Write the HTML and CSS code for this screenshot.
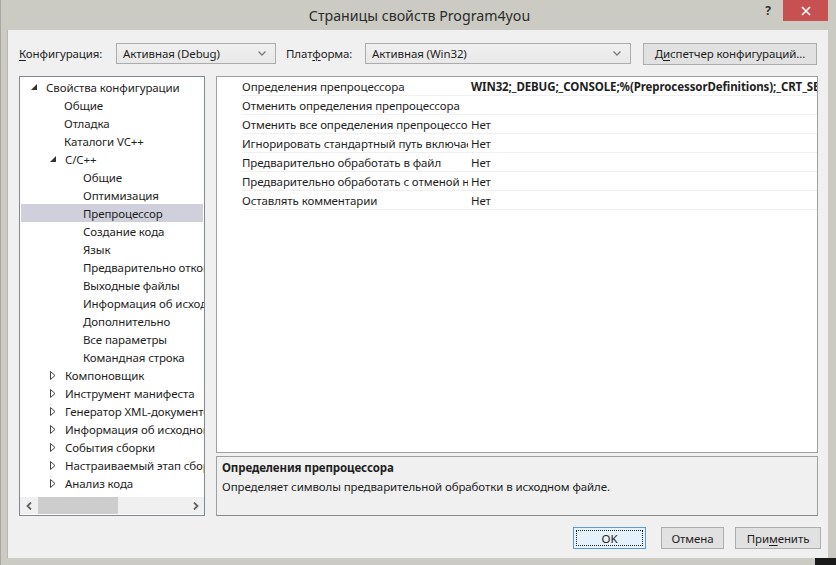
FILE: index.html
```html
<!DOCTYPE html>
<html lang="ru">
<head>
<meta charset="utf-8">
<title>Страницы свойств Program4you</title>
<link rel="stylesheet" href="styles.css">
</head>
<body>
<div class="window">
  <div class="titlebar">
    <div class="title">Страницы свойств Program4you</div>
    <div class="caption-btns">
      <span class="help">?</span>
      <span class="close"><svg width="10" height="10" viewBox="0 0 10 10"><path d="M1 1L9 9M9 1L1 9" stroke="#fff" stroke-width="1.6"/></svg></span>
    </div>
  </div>
  <div class="client">
    <div class="toolbar">
      <label class="lbl lbl-conf"><span class="ak">К</span>онфигурация:</label>
      <div class="combo combo-conf"><span>Активная (Debug)</span><svg class="chev" width="8" height="5" viewBox="0 0 8 5"><path d="M0.5 0.5L4 4L7.5 0.5" fill="none" stroke="#7a7a7a" stroke-width="1.3"/></svg></div>
      <label class="lbl lbl-plat">Плат<span class="ak">ф</span>орма:</label>
      <div class="combo combo-plat"><span>Активная (Win32)</span><svg class="chev" width="8" height="5" viewBox="0 0 8 5"><path d="M0.5 0.5L4 4L7.5 0.5" fill="none" stroke="#7a7a7a" stroke-width="1.3"/></svg></div>
      <button class="btn btn-mgr">Д<span class="ak">и</span>спетчер конфигураций...</button>
    </div>
    <div class="main">
      <div class="tree">
        <ul class="tree-list">
          <li class="row l0"><span class="tw"><svg width="6" height="6" viewBox="0 0 6 6"><path d="M6 0V6H0Z" fill="#333"/></svg></span>Свойства конфигурации</li>
          <li class="row l1n">Общие</li>
          <li class="row l1n">Отладка</li>
          <li class="row l1n">Каталоги VC++</li>
          <li class="row l1"><span class="tw"><svg width="6" height="6" viewBox="0 0 6 6"><path d="M6 0V6H0Z" fill="#333"/></svg></span>C/C++</li>
          <li class="row l2">Общие</li>
          <li class="row l2">Оптимизация</li>
          <li class="row l2 sel">Препроцессор</li>
          <li class="row l2">Создание кода</li>
          <li class="row l2">Язык</li>
          <li class="row l2">Предварительно откомпилированные заголовки</li>
          <li class="row l2">Выходные файлы</li>
          <li class="row l2">Информация об исходных файлах</li>
          <li class="row l2">Дополнительно</li>
          <li class="row l2">Все параметры</li>
          <li class="row l2">Командная строка</li>
          <li class="row l1c"><span class="tw"><svg width="6" height="9" viewBox="0 0 6 9"><path d="M0.5 0.5L5 4.5L0.5 8.5Z" fill="none" stroke="#444" stroke-width="1"/></svg></span>Компоновщик</li>
          <li class="row l1c"><span class="tw"><svg width="6" height="9" viewBox="0 0 6 9"><path d="M0.5 0.5L5 4.5L0.5 8.5Z" fill="none" stroke="#444" stroke-width="1"/></svg></span>Инструмент манифеста</li>
          <li class="row l1c"><span class="tw"><svg width="6" height="9" viewBox="0 0 6 9"><path d="M0.5 0.5L5 4.5L0.5 8.5Z" fill="none" stroke="#444" stroke-width="1"/></svg></span>Генератор XML-документов</li>
          <li class="row l1c"><span class="tw"><svg width="6" height="9" viewBox="0 0 6 9"><path d="M0.5 0.5L5 4.5L0.5 8.5Z" fill="none" stroke="#444" stroke-width="1"/></svg></span>Информация об исходном коде</li>
          <li class="row l1c"><span class="tw"><svg width="6" height="9" viewBox="0 0 6 9"><path d="M0.5 0.5L5 4.5L0.5 8.5Z" fill="none" stroke="#444" stroke-width="1"/></svg></span>События сборки</li>
          <li class="row l1c"><span class="tw"><svg width="6" height="9" viewBox="0 0 6 9"><path d="M0.5 0.5L5 4.5L0.5 8.5Z" fill="none" stroke="#444" stroke-width="1"/></svg></span>Настраиваемый этап сборки</li>
          <li class="row l1c"><span class="tw"><svg width="6" height="9" viewBox="0 0 6 9"><path d="M0.5 0.5L5 4.5L0.5 8.5Z" fill="none" stroke="#444" stroke-width="1"/></svg></span>Анализ кода</li>
        </ul>
        <div class="hscroll">
          <span class="sarrow"><svg width="6" height="8" viewBox="0 0 6 8"><path d="M5 0.5L1.5 4L5 7.5" fill="none" stroke="#606060" stroke-width="1.8"/></svg></span>
          <div class="track"><div class="thumb"></div></div>
          <span class="sarrow"><svg width="6" height="8" viewBox="0 0 6 8"><path d="M1 0.5L4.5 4L1 7.5" fill="none" stroke="#606060" stroke-width="1.8"/></svg></span>
        </div>
      </div>
      <div class="right">
        <div class="grid">
          <div class="prow"><div class="pname">Определения препроцессора</div><div class="pval bold">WIN32;_DEBUG;_CONSOLE;%(PreprocessorDefinitions);_CRT_SECURE_NO_WARNINGS</div></div>
          <div class="prow"><div class="pname">Отменить определения препроцессора</div><div class="pval"></div></div>
          <div class="prow"><div class="pname">Отменить все определения препроцессора</div><div class="pval">Нет</div></div>
          <div class="prow"><div class="pname">Игнорировать стандартный путь включаемых файлов</div><div class="pval">Нет</div></div>
          <div class="prow"><div class="pname">Предварительно обработать в файл</div><div class="pval">Нет</div></div>
          <div class="prow"><div class="pname">Предварительно обработать с отменой номеров строк</div><div class="pval">Нет</div></div>
          <div class="prow"><div class="pname">Оставлять комментарии</div><div class="pval">Нет</div></div>
        </div>
        <div class="desc">
          <div class="desc-title">Определения препроцессора</div>
          <div class="desc-text">Определяет символы предварительной обработки в исходном файле.</div>
        </div>
      </div>
    </div>
    <div class="footer">
      <button class="btn btn-ok"><span class="focus">OK</span></button>
      <button class="btn btn-cancel">Отмена</button>
      <button class="btn btn-apply">При<span class="ak">м</span>енить</button>
    </div>
  </div>
  <div class="corner"></div>
</div>
</body>
</html>
```

FILE: styles.css
```css
* { box-sizing: border-box; }
html, body { margin: 0; padding: 0; }
body {
  width: 836px;
  height: 565px;
  overflow: hidden;
  font-family: "Noto Sans", "Segoe UI", sans-serif;
  font-size: 11.5px;
  letter-spacing: -0.1px;
  color: #1e1e1e;
  background: #cbcbc4;
}
.window {
  position: relative;
  width: 836px;
  height: 565px;
  display: flex;
  flex-direction: column;
  background: #cbcbc4;
  border-left: 1px solid #a9a9a2;
}
.titlebar {
  height: 30px;
  flex: none;
  position: relative;
  display: flex;
  align-items: center;
  justify-content: center;
}
.title {
  font-size: 14.2px;
  letter-spacing: 0;
  color: #2b2b2b;
  padding-left: 2px;
}
.caption-btns {
  position: absolute;
  right: 8px;
  top: 0;
  display: flex;
  align-items: flex-start;
}
.help {
  width: 28px;
  height: 21px;
  display: flex;
  align-items: center;
  justify-content: center;
  font-weight: bold;
  font-size: 12px;
  color: #333;
  margin-right: 1px;
}
.close {
  width: 45px;
  height: 21px;
  background: #c75050;
  display: flex;
  align-items: center;
  justify-content: center;
}
.client {
  flex: 1;
  margin: 0 8px 7px 6px;
  background: #f0f0f0;
  border-left: 1px solid #b8b8b0;
  display: flex;
  flex-direction: column;
}
.toolbar {
  display: flex;
  align-items: center;
  height: 21px;
  margin-top: 13px;
  padding-left: 11px;
}
.lbl { color: #1e1e1e; }
.ak { text-decoration: underline; text-underline-offset: 2px; }
.lbl-conf { width: 97px; }
.lbl-plat { width: 79px; margin-left: 10px; }
.combo {
  height: 21px;
  border: 1px solid #acacac;
  background: linear-gradient(#f0f0f0, #e8e8e8);
  display: flex;
  align-items: center;
  justify-content: space-between;
  padding: 0 9px 0 6px;
}
.combo-conf { width: 160px; }
.combo-plat { width: 266px; }
.btn {
  font-family: inherit;
  font-size: 11.5px;
  letter-spacing: -0.1px;
  color: #1e1e1e;
  height: 22px;
  border: 1px solid #adadad;
  background: #e1e1e1;
  padding: 0;
  display: flex;
  align-items: center;
  justify-content: center;
}
.btn-mgr { width: 174px; margin-left: 12px; }
.main {
  display: flex;
  margin-top: 12px;
  padding-left: 11px;
  height: 440px;
}
.tree {
  width: 186px;
  height: 440px;
  border: 1px solid #828790;
  background: #fff;
  display: flex;
  flex-direction: column;
  overflow: hidden;
}
.tree-list {
  list-style: none;
  margin: 0;
  padding: 1px 0 0 0;
  flex: 1;
  overflow: hidden;
}
.row {
  height: 18px;
  display: flex;
  align-items: center;
  white-space: nowrap;
  margin: 0 1px;
}
.tw {
  width: 15px;
  flex: none;
  display: flex;
  align-items: center;
}
.l0 { padding-left: 10px; }
.l1 { padding-left: 29px; }
.l1n { padding-left: 43px; }
.l1c { padding-left: 29px; }
.l2 { padding-left: 62px; }
.sel { background: #cfd0db; }
.hscroll {
  height: 17px;
  margin-bottom: 1px;
  display: flex;
  align-items: stretch;
  background: #f0f0f0;
}
.sarrow {
  width: 17px;
  flex: none;
  display: flex;
  align-items: center;
  justify-content: center;
}
.track { flex: 1; display: flex; align-items: stretch; }
.thumb { width: 80px; margin-left: 1px; background: #cdcdcd; }
.right {
  margin-left: 11px;
  width: 602px;
  display: flex;
  flex-direction: column;
}
.grid {
  height: 377px;
  border: 1px solid #a0a0a0;
  background: #fff;
  padding-left: 25px;
  overflow: hidden;
}
.prow {
  height: 19px;
  display: flex;
  align-items: center;
  border-bottom: 1px solid #f0f0f0;
  white-space: nowrap;
}
.pname {
  width: 226px;
  flex: none;
  overflow: hidden;
  padding-right: 1px;
}
.pval {
  flex: 1;
  overflow: hidden;
  padding-left: 3px;
}
.bold { font-weight: bold; }
.desc {
  margin-top: 3px;
  height: 60px;
  border: 1px solid #a0a0a0;
  border-bottom-color: #8a8a8a;
  background: #f0f0f0;
  padding: 2px 5px;
}
.desc-title { font-weight: bold; height: 18px; line-height: 18px; }
.desc-text { height: 20px; line-height: 20px; }
.footer {
  display: flex;
  justify-content: flex-end;
  margin-top: 11px;
  padding-right: 7px;
}
.btn-ok {
  width: 73px;
  border-color: #5b9bd5;
  background: #e5f1fb;
  padding: 2px;
}
.focus {
  width: 100%;
  height: 100%;
  border: 1px dotted #222;
  display: flex;
  align-items: center;
  justify-content: center;
}
.btn-cancel { width: 63px; margin-left: 15px; }
.btn-apply { width: 86px; margin-left: 11px; }
.corner {
  position: absolute;
  right: 0;
  bottom: 0;
  width: 21px;
  height: 7px;
  background: #1a1a1a;
}
```
